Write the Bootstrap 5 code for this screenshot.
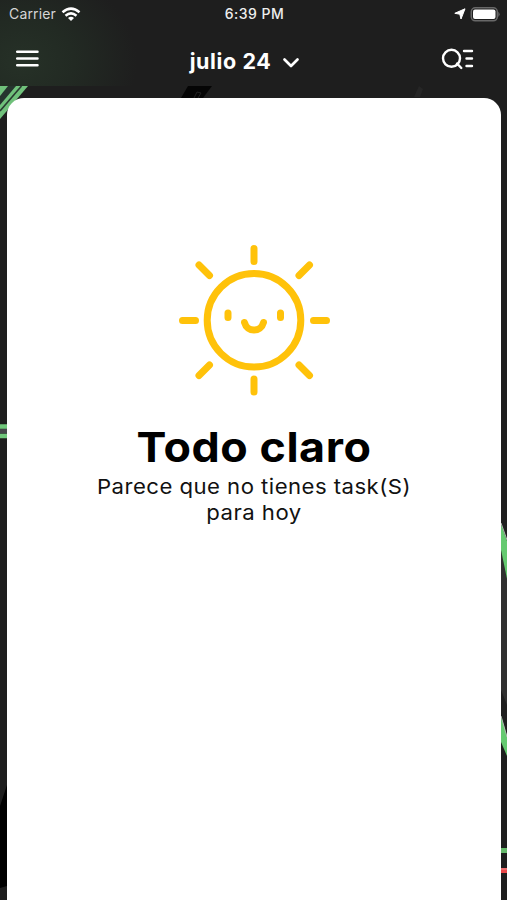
<!DOCTYPE html>
<html lang="es">
<head>
<meta charset="utf-8">
<meta name="viewport" content="width=device-width, initial-scale=1">
<title>julio 24</title>
<link href="https://cdn.jsdelivr.net/npm/bootstrap@5.3.0/dist/css/bootstrap.min.css" rel="stylesheet">
<style>
html,body{height:100%}
body{background:#1e1e1e;font-family:"Inter","Liberation Sans",sans-serif;overflow:hidden}
.screen{width:507px;height:900px;overflow:hidden}
.backdrop{top:0;left:0}
.topbar{height:86px;background:radial-gradient(ellipse 115px 95px at 22px 62px,#263127 0,#222a23 45%,#1e1e1e 100%)}
.statusbar{height:28px;padding:0 7px 0 9px;font-size:14px;line-height:28px}
.carrier{color:#d5d5d5;letter-spacing:.15px}
.wifi{margin-left:5px}
.clock{font-weight:500;font-size:14px;letter-spacing:.5px;color:#eee}
.toolbar-row{height:58px;padding:2px 33px 0 16px}
.month{font-weight:700;font-size:21.5px;line-height:30px;letter-spacing:.6px}
.month-picker{padding:5px 0 0 10px}
.month-arrow{margin:4px 0 0 11px}
.search-list{margin-top:2px}
.sheet{margin:12px 6px 0 7px;height:802px;border-radius:17px 17px 0 0;padding-top:142px}
.headline{font-size:41.5px;line-height:46px;font-weight:700;color:#000;margin-top:24px;letter-spacing:.5px;transform:scaleX(1.08)}
.message{font-size:20.5px;line-height:26px;color:#111;margin-top:4px;letter-spacing:.43px;transform:scaleX(1.08)}
.side{width:33.333%}
svg{display:block}
</style>
<script src="https://cdn.jsdelivr.net/npm/bootstrap@5.3.0/dist/js/bootstrap.bundle.min.js"></script>
</head>
<body>
<div class="screen position-relative">
  <svg class="backdrop position-absolute" width="507" height="900" viewBox="0 0 507 900" aria-hidden="true">
    <rect width="507" height="900" fill="#1e1e1e"/>
    <path d="M0 86H28L0 119Z" fill="#70c17b"/>
    <path d="M0 96L8 86H16L0 105Z" fill="#26342e"/>
    <path d="M0 111L21.500 86" stroke="#293a30" stroke-width="1.600"/>
    <path d="M188 86H212L203 98H181Z" fill="#050505"/>
    <path d="M194 98l3-6 4 1-3 5" stroke="#222" fill="none"/>
    <path d="M414 97l5-11 4 3-3 8" fill="#262626"/>
    <path d="M0 431H8" stroke="#45464a" stroke-width="5"/>
    <path d="M0 426.500H8M0 436H8" stroke="#70c77b" stroke-width="4.500"/>
    <path d="M7 785L0 806V888L7 886Z" fill="#000"/>
    <path d="M501 550L507 579V705L501 690Z" fill="#303030"/>
    <path d="M501 524L507 541V579L501 550Z" fill="#65ca70"/>
    <path d="M501 716L507 736V756L501 742Z" fill="#65ca70"/>
    <path d="M501 523L507 540M501 716L507 737" stroke="#b0b8b0"/>
    <path d="M500 850.500H507" stroke="#65b96b" stroke-width="5"/>
    <path d="M500 870.500H507" stroke="#e94748" stroke-width="5"/>
    <path d="M500 869H507" stroke="#ef9999"/>
  </svg>
  <header class="topbar position-relative text-white">
    <div class="statusbar d-flex align-items-center justify-content-between">
      <div class="side d-flex align-items-center"><span class="carrier">Carrier</span>
        <svg class="wifi" width="20" height="15" viewBox="0 0 20 15" fill="none" stroke="#fff" stroke-width="2.500"><path d="M1.500 5.200Q10-2 18.500 5.200M4.500 8.700Q10 4 15.500 8.700"/><path d="M7 11Q10 8.500 13 11L10 14Z" fill="#fff" stroke="none"/></svg>
      </div>
      <span class="clock">6:39 PM</span>
      <div class="side d-flex align-items-center justify-content-end">
        <svg width="12" height="12" viewBox="0 0 12 12"><path d="M.8 5.300L11 .8 7 11 5.800 6.200Z" fill="#fff" stroke="#fff" stroke-width="1" stroke-linejoin="round"/></svg>
        <svg class="ms-1" width="30" height="15" viewBox="0 0 30 15"><rect x="1.300" y="0.800" width="26" height="13" rx="4" fill="none" stroke="#686868" stroke-width="1.500"/><rect x="3" y="2.500" width="22.500" height="9.600" rx="2" fill="#fff"/><path d="M28.300 4.500Q31 7.300 28.300 10Z" fill="#686868"/></svg>
      </div>
    </div>
    <nav class="toolbar-row d-flex align-items-center justify-content-between" aria-label="Principal">
      <svg width="23" height="17" viewBox="0 0 23 17" stroke="#fff" stroke-width="2.500" stroke-linecap="round"><path d="M1.200 1.700H21.500M1.200 8.500H21.500M1.200 15.300H21.500"/></svg>
      <div class="month-picker d-flex align-items-center"><span class="month">julio 24</span>
        <svg class="month-arrow" width="18" height="12" viewBox="0 0 18 12" fill="none" stroke="#fff" stroke-width="2.700" stroke-linecap="round" stroke-linejoin="round"><path d="M2.500 2.500L9 9 15.500 2.500"/></svg>
      </div>
      <svg class="search-list" width="33" height="22" viewBox="0 0 33 22" fill="none" stroke="#fff" stroke-width="2.400"><circle cx="10.500" cy="10.300" r="8.500"/><path d="M16 15.500L20.300 20M23 3H31M25.500 10.500H31M25.500 18H31" stroke-linecap="round"/></svg>
    </nav>
  </header>
  <main class="sheet bg-white position-relative text-center">
    <svg class="mx-auto" width="160" height="160" viewBox="174 240 160 160" fill="none" stroke="#ffc20a" stroke-width="7" stroke-linecap="round">
      <circle cx="254" cy="320.300" r="46.800"/>
      <path d="M254 248.500V261.500M254 379V392M182.500 320.500H195.500M313.500 320.500H326.500M199 265L209.500 275.500M299 275.500L309.500 265M199 375.500L209.500 365M299 365L309.500 375.500M228 313V317.500M280.500 313V317.500M244.500 322.500C247 332.500 261 332.500 263.500 322.500"/>
    </svg>
    <h1 class="headline mb-0">Todo claro</h1>
    <p class="message mb-0">Parece que no tienes task(S)<br>para hoy</p>
  </main>
</div>
</body>
</html>
